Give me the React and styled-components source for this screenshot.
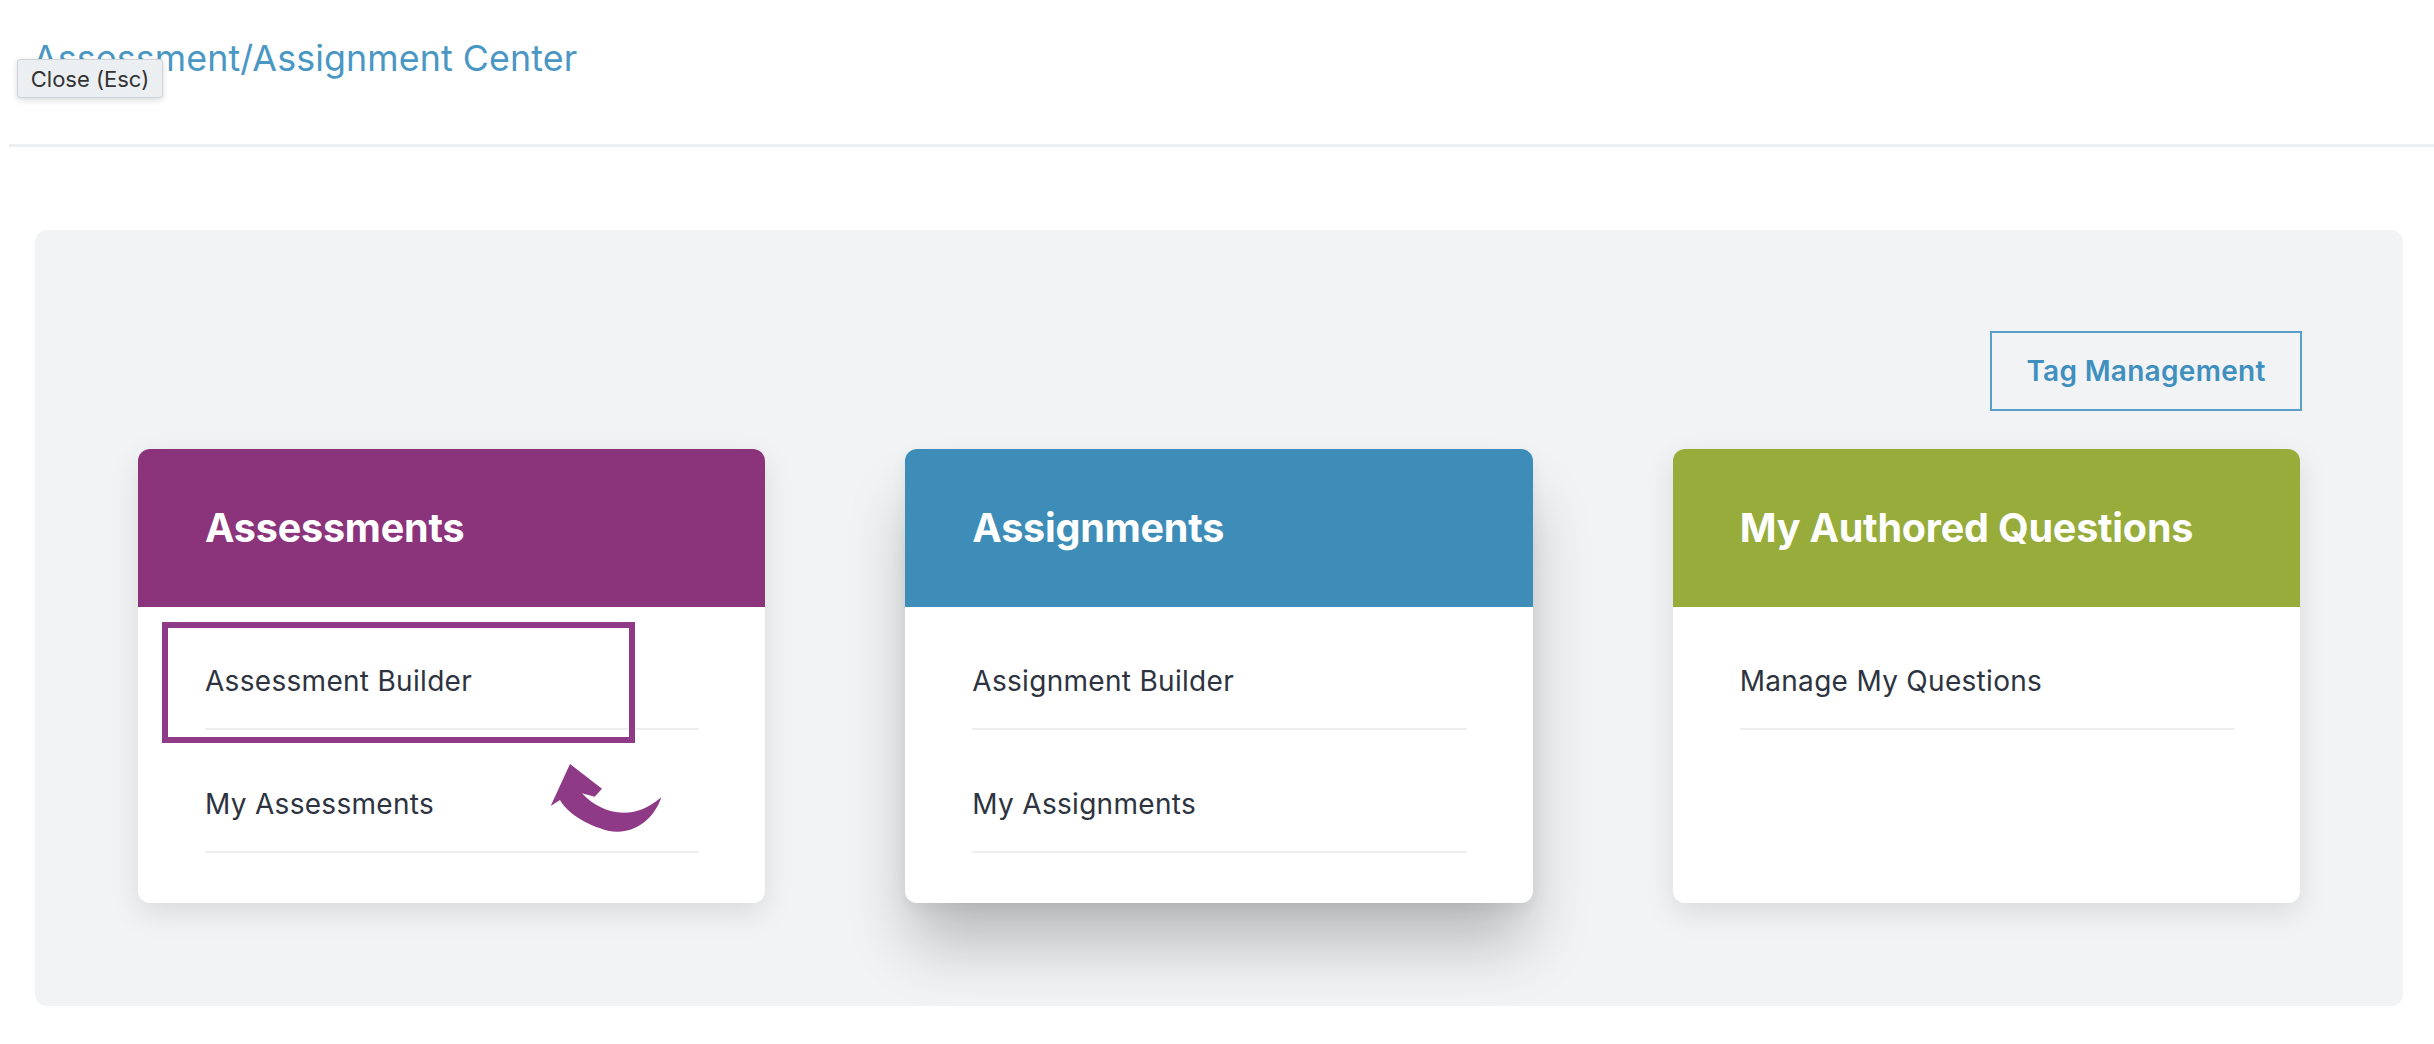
import styled, { createGlobalStyle } from 'styled-components';

//Global page reset
const GlobalStyle = createGlobalStyle`
  html, body {
    margin: 0;
    padding: 0;
    background: #ffffff;
  }
  body {
    font-family: Inter, "Noto Sans", "Liberation Sans", sans-serif;
    color: #2d3340;
  }
  * {
    box-sizing: border-box;
  }
`;

//Card data
const sections = [
  {
    title: 'Assessments',
    color: '#8b347c',
    items: ['Assessment Builder', 'My Assessments'],
    annotated: true,
  },
  {
    title: 'Assignments',
    color: '#3d8db8',
    items: ['Assignment Builder', 'My Assignments'],
    raised: true,
  },
  {
    title: 'My Authored Questions',
    color: '#97ac3b',
    items: ['Manage My Questions'],
  },
];

const CurvedArrow = () => (
  <StyledArrow viewBox="0 0 480 330" width="160" height="110">
    <path
      d="M120,72 L216,146 L194,170 L156,160 C208,216 302,252 394,172 C370,244 304,288 234,272 C164,254 110,216 90,180 L62,198 Z"
      fill="#8e3a87"
    />
  </StyledArrow>
);

const App = () => {
  return (
    <>
      <GlobalStyle />
      <StyledPage>
        <StyledHeader>
          <h1>Assessment/Assignment Center</h1>
          <StyledTooltip>Close (Esc)</StyledTooltip>
        </StyledHeader>
        <StyledMain>
          <StyledPanel>
            <StyledToolbar>
              <StyledOutlineButton>Tag Management</StyledOutlineButton>
            </StyledToolbar>
            <StyledGrid>
              {sections.map((section) => (
                <StyledCard key={section.title} $raised={section.raised}>
                  <StyledCardHeader $color={section.color}>
                    <h2>{section.title}</h2>
                  </StyledCardHeader>
                  <StyledCardBody>
                    {section.items.map((item, index) => (
                      <StyledItem key={item}>
                        {item}
                        {section.annotated && index === 0 && <StyledHighlight />}
                      </StyledItem>
                    ))}
                  </StyledCardBody>
                  {section.annotated && <CurvedArrow />}
                </StyledCard>
              ))}
            </StyledGrid>
          </StyledPanel>
        </StyledMain>
      </StyledPage>
    </>
  );
};

const StyledPage = styled.div`
  width: 100%;
  min-height: 1044px;
  padding-bottom: 38px;
`;

const StyledHeader = styled.header`
  position: relative;
  margin-left: 9px;
  height: 147px;
  padding: 36px 0 0 24px;
  border-bottom: 3px solid #eceef1;
  h1 {
    margin: 0;
    font-size: 35.8px;
    font-weight: 400;
    line-height: 44px;
    color: #4a97c4;
    letter-spacing: 0.1px;
  }
`;

const StyledTooltip = styled.div`
  position: absolute;
  left: 8px;
  top: 59px;
  width: 146px;
  height: 39px;
  display: flex;
  align-items: center;
  justify-content: center;
  background: #eceff2;
  border: 1px solid #cfd2d6;
  border-radius: 3px;
  box-shadow: 0 2px 6px rgba(0, 0, 0, 0.15);
  font-family: Inter, "Liberation Sans", sans-serif;
  font-size: 22px;
  color: #333333;
`;

const StyledMain = styled.main`
  padding: 83px 31px 0 35px;
`;

const StyledPanel = styled.section`
  background: #f2f3f5;
  border-radius: 12px;
  padding: 101px 103px 103px;
`;

const StyledToolbar = styled.div`
  display: flex;
  justify-content: flex-end;
  margin-bottom: 38px;
`;

const StyledOutlineButton = styled.button`
  height: 80px;
  width: 312px;
  margin-right: -2px;
  background: transparent;
  border: 2px solid #5a9fc9;
  color: #3f8fbf;
  font-family: Inter, "Liberation Sans", sans-serif;
  font-size: 28px;
  font-weight: 600;
  letter-spacing: 0.3px;
  cursor: pointer;
`;

const StyledGrid = styled.div`
  display: grid;
  grid-template-columns: repeat(3, 1fr);
  column-gap: 140px;
`;

const StyledCard = styled.div`
  position: relative;
  display: flex;
  flex-direction: column;
  height: 454px;
  background: #ffffff;
  border-radius: 12px;
  box-shadow: ${(p) =>
    p.$raised
      ? '0 46px 64px -6px rgba(0, 0, 0, 0.24), 0 6px 16px rgba(0, 0, 0, 0.06)'
      : '0 10px 30px rgba(0, 0, 0, 0.1)'};
`;

const StyledCardHeader = styled.div`
  height: 158px;
  flex-shrink: 0;
  display: flex;
  align-items: center;
  padding-left: 67px;
  background: ${(p) => p.$color};
  border-radius: 12px 12px 0 0;
  h2 {
    margin: 0;
    font-size: 39.5px;
    font-weight: 700;
    letter-spacing: -0.2px;
    color: #ffffff;
  }
`;

const StyledCardBody = styled.div`
  padding: 0 66px 50px 67px;
`;

const StyledItem = styled.div`
  position: relative;
  margin-top: 27px;
  padding: 31px 0;
  line-height: 32px;
  font-size: 28px;
  letter-spacing: 0.3px;
  color: #2d3340;
  border-bottom: 2px solid #eceef0;
`;

const StyledHighlight = styled.span`
  position: absolute;
  left: -43px;
  top: -12px;
  width: 473px;
  height: 121px;
  border: 6px solid #8e3a87;
  pointer-events: none;
`;

const StyledArrow = styled.svg`
  position: absolute;
  left: 392px;
  top: 291px;
`;

export default App;
